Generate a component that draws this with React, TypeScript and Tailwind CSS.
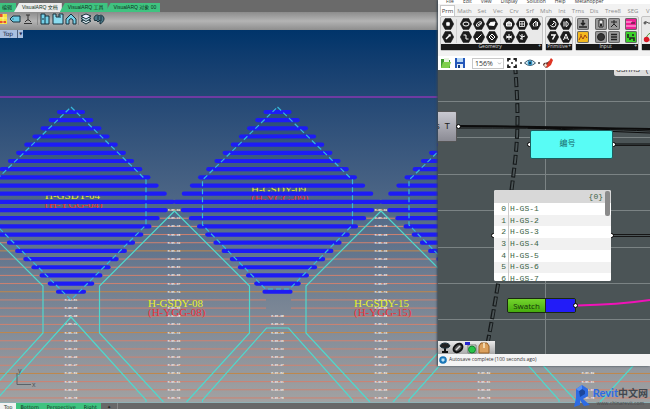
import type { ReactNode } from "react";
import { ChevronDown } from "lucide-react";

const PITCH = 8.17;
const FIRST_ROW = 112;
const ROWS = Array.from({ length: 36 }, (_, i) => i);
const WIDE_ROW = 11;

const rowY = (k: number) => FIRST_ROW + k * PITCH;
const halfWidth = (k: number) => (k <= WIDE_ROW ? 14 + PITCH * k : 15 + PITCH * (22 - k));

const diamonds = [
  { x: 71, flat: false },
  { x: 277.5, flat: true },
  { x: 484, flat: true },
];

// x position of each tag column and the first row that carries a tag
const tagColumns = [
  { x: 71, from: 23 },
  { x: 174, from: 12 },
  { x: 277.5, from: 25 },
  { x: 381, from: 12 },
  { x: 484, from: 25 },
  { x: 588, from: 12 },
];

const cellNames = [
  { x: 45, y: 199, name: "H-GSDY-04", code: "(H-YGG-04)" },
  { x: 251, y: 193, name: "H-GSDY-09", code: "(H-YGG-09)" },
  { x: 148, y: 307, name: "H-GSDY-08", code: "(H-YGG-08)" },
  { x: 354, y: 307, name: "H-GSDY-15", code: "(H-YGG-15)" },
];

function Drawing() {
  return (
    <svg viewBox="0 30 650 373" preserveAspectRatio="xMinYMin slice" className="block h-full w-full">
      <line x1="0" x2="650" y1="97" y2="97" stroke="#8a37b0" strokeWidth="1.6" />

      {ROWS.filter((k) => k >= 12).map((k) => {
        const half = k < 23 ? (k - 12) * PITCH + 5 : 0;
        const color = k % 5 === 2 ? "#c0874a" : "#cf8270";
        if (k < 23) {
          return [-32, 174, 381, 588].map((x) => (
            <line key={`${k}-${x}`} x1={x - half - 12} x2={x + half + 12} y1={rowY(k)} y2={rowY(k)} stroke={color} />
          ));
        }
        if (k < 25) {
          return (
            <path key={k} d={`M0 ${rowY(k)}H266M291 ${rowY(k)}H650`} stroke={color} />
          );
        }
        return <line key={k} x1="0" x2="650" y1={rowY(k)} y2={rowY(k)} stroke={color} />;
      })}

      <g fill="#ececec" fontSize="3" textAnchor="middle" className="font-['Liberation_Mono',monospace] font-bold">
        {tagColumns.map((col) =>
          ROWS.filter((k) => k >= col.from).map((k) => (
            <text key={`${col.x}-${k}`} x={col.x} y={rowY(k) + 1}>
              {`H-GS-${(k * 7) % 90 + 10}`}
            </text>
          )),
        )}
      </g>

      <g fill="none" stroke="#50d8cc" strokeWidth="1.2">
        {[-32, 174.5, 381, 588].map((x) => (
          <g key={x}>
            <path d={`M${x} 211L${x - 75} 286V333L${x - 11} 402`} />
            <path d={`M${x} 211L${x + 75} 286V333L${x + 12} 402`} />
          </g>
        ))}
        {diamonds.map((d) => (
          <path
            key={d.x}
            d={
              d.flat
                ? `M${d.x - 75} 402V400L${d.x - 11} 328H${d.x + 11}L${d.x + 75} 400V402`
                : `M${d.x - 75} 402V400L${d.x} 317L${d.x + 75} 400V402`
            }
          />
        ))}
      </g>

      <g fontSize="11" className="font-['Liberation_Serif',serif]">
        {cellNames.map((c) => (
          <g key={c.name}>
            <text x={c.x} y={c.y} fill="#e8f02c">{c.name}</text>
            <text x={c.x} y={c.y + 9} fill="#ee3038">{c.code}</text>
          </g>
        ))}
      </g>

      <g stroke="#1d1cf5" strokeWidth="4.2" strokeLinecap="round">
        {diamonds.map((d) =>
          ROWS.filter((k) => k <= 22).map((k) => (
            <line
              key={`${d.x}-${k}`}
              x1={d.x - halfWidth(k) + 2}
              x2={d.x + halfWidth(k) - 2}
              y1={rowY(k)}
              y2={rowY(k)}
            />
          )),
        )}
      </g>

      <g fill="none" stroke="#35b8dc" strokeWidth="1.2" strokeDasharray="5 3">
        {diamonds.map((d) => (
          <path
            key={d.x}
            d={
              d.flat
                ? `M${d.x} 107L${d.x + 75} 180V225L${d.x + 12} 289H${d.x - 12}L${d.x - 75} 225V180Z`
                : `M${d.x} 107L${d.x + 75} 180V225L${d.x} 300L${d.x - 75} 225V180Z`
            }
          />
        ))}
      </g>

      <path d="M17 373V384.500H31" fill="none" stroke="#5b6268" />
      <g fill="#50565c" fontSize="7" className="font-['Liberation_Sans',sans-serif]">
        <text x="18" y="373">y</text>
        <text x="32" y="387">x</text>
      </g>
      <line x1="0" x2="650" y1="402.500" y2="402.500" stroke="#8fb0b4" />
    </svg>
  );
}

function RhinoTab({ children, active }: { children: ReactNode; active?: boolean }) {
  return (
    <button
      className={`-ml-0.5 h-full pl-2 pr-1 text-left whitespace-nowrap [clip-path:polygon(5px_0,100%_0,100%_100%,0_100%)] ${
        active ? "bg-[#ececec]" : "bg-[#3fc380]"
      }`}
    >
      {children}
    </button>
  );
}

function ToolButton({ label, children }: { label: string; children: ReactNode }) {
  return (
    <button aria-label={label} className="h-3 w-3 shrink-0">
      <svg viewBox="0 0 12 12" className="h-3 w-3" fill="none" stroke="#17313c" strokeWidth="1">
        {children}
      </svg>
    </button>
  );
}

function RhinoToolbar() {
  return (
    <div className="flex h-[18px] items-center gap-px bg-linear-to-b from-[#8c8c8c] via-[#b4b4b4] to-[#8e8e8e] pb-1">
      <button aria-label="Levels" className="h-3 w-2">
        <svg viewBox="0 0 8 12" className="h-3 w-2">
          <path d="M0 1H7V11H0Z" fill="#f6e23a" />
          <path d="M0 1H3V4H0ZM0 8H6V10H0Z" fill="#e8502c" />
          <path d="M3 1V11M0 5H7" stroke="#fff7b0" strokeWidth=".7" />
        </svg>
      </button>
      <ToolButton label="Tag">
        <path d="M1 6L4 3H11V9H4Z" fill="#6ccbe4" />
        <path d="M4 5.500V6.500" />
      </ToolButton>
      <ToolButton label="Stamp">
        <path d="M4 2H8M6 2V7M3 9L5 7H7L9 9M2 10.500H10" stroke="#333" />
      </ToolButton>
      <span className="ml-0.5 h-3 w-px bg-[#8a8a8a]" />
      <ToolButton label="Door">
        <path d="M2 11V1H6V11ZM6 3H10V11H6" fill="#74d0e8" />
        <path d="M4 5V7" />
      </ToolButton>
      <ToolButton label="Section">
        <path d="M1 1H4V4H7V1H11V11H1Z" fill="#8adcf0" />
        <path d="M8 2V5" />
      </ToolButton>
      <ToolButton label="House">
        <path d="M1 6L6 1L11 6V11H8V7Q6 4 4 7V11H1Z" fill="#74d0e8" />
      </ToolButton>
      <span className="h-3 w-px bg-[#8a8a8a]" />
      <ToolButton label="Layers">
        <path d="M1 8L6 11L11 8L6 6Z" fill="#d8e6ea" />
        <path d="M1 5.500L6 8.500L11 5.500L6 3Z" fill="#bcdce4" />
        <path d="M1 3L6 6L11 3L6 1Z" fill="#eef" />
      </ToolButton>
      <ToolButton label="Shell">
        <path d="M1 6C1 2 5 1 6 3C8 1 11 3 11 6C11 8 9 10 7 11V7L5 9L3 7L2 8Z" fill="#4a7888" />
        <path d="M5 3V7M8 3V8" />
      </ToolButton>
    </div>
  );
}

const hexGlyphs: Record<string, ReactNode> = {
  Point: <path d="M4.500 4.500L7.500 7.500M7.500 4.500L4.500 7.500" strokeWidth="1.8" />,
  Vector: <path d="M4 8L8 4M6.500 4H8V5.500" strokeWidth="1.5" />,
  Circle: <ellipse cx="6" cy="6" rx="3" ry="2" />,
  Curve: <path d="M3.500 4H6V8H8.500" />,
  Ellipse: <path d="M3.500 8C3 5 7 3 8.500 4C9 6 6 9 3.500 8ZM5 7L8 5" />,
  Line: <path d="M3.500 8.500L8.500 3.500M3.500 7V8.500H5" />,
  Plane: <path d="M3 7L4.500 4.500L9 4L8 7.500Z" fill="#fff" />,
  Transform: <path d="M6 3L9 6L6 9L3 6ZM5 5L7 7" />,
  Brep: <path d="M3.500 5L6 3.500L8.500 5V8H3.500ZM3.500 5H8.500" fill="#aaa" />,
  Box: <path d="M6 3V9M3 5L9 7M3 7L9 5" />,
  Mesh: <path d="M3.500 3.500H8.500V8.500H3.500ZM6 3.500V8.500M3.500 6H8.500" strokeWidth=".8" />,
  Group: <path d="M6 3V9M6 6L3.500 4M6 6L9 5M6 7L4 8" />,
  Surface: <path d="M7 3L4 6L5 8.500M7 3V8.500M8.500 4V8" />,
  Domain: <path d="M3.500 7A2.800 2.800 0 1 0 6 3.300M5 7L7.500 4.500" />,
  Colour: <path d="M4 3.500V8.500M6 3.500V8.500M6 3.500C9 4 9 8 6 8.500" />,
  Integer: <path d="M4 4H8L5.500 8.500" strokeWidth="1.5" />,
  Text: <path d="M3.500 9L6 3L8.500 9M4.500 7H7.500" />,
};

function Hex({ name }: { name: string }) {
  return (
    <button aria-label={name} className="h-[12px] w-[12px]">
      <svg viewBox="0 0 12 12" className="h-3 w-3" fill="none" stroke="#fff">
        <path d="M3.200 .6H8.800L11.700 6L8.800 11.400H3.200L.3 6Z" fill="#1c1c1c" stroke="#111" strokeWidth=".5" />
        {hexGlyphs[name]}
      </svg>
    </button>
  );
}

function Tile({ name, children, className = "bg-[#9a9a9a]" }: { name: string; children: ReactNode; className?: string }) {
  return (
    <button aria-label={name} className={`h-[12px] w-[12px] rounded-xs ring-1 ring-inset ring-[#666] ${className}`}>
      <svg viewBox="0 0 12 12" className="h-3 w-3" fill="none" stroke="#222">
        {children}
      </svg>
    </button>
  );
}

function RibbonPanel({ title, children, className = "" }: { title: string; children: ReactNode; className?: string }) {
  return (
    <section className={`flex shrink-0 flex-col rounded-xs border border-[#c4c4c4] bg-[#e9e9e9] ${className}`}>
      <div className="flex flex-1 items-center justify-between px-px">{children}</div>
      <div className="flex h-[6px] justify-end bg-[#181818] px-px text-[5px] leading-[5px] text-[#ddd]">
        <span className="flex-1 text-center">{title}</span>
        <span>+</span>
      </div>
    </section>
  );
}

function Ribbon() {
  return (
    <div className="flex h-[35px] shrink-0 gap-0.5 overflow-hidden pl-0.5">
      <RibbonPanel title="Geometry" className="w-[103px]">
        <div className="grid gap-px"><Hex name="Point" /><Hex name="Vector" /></div>
        <span className="h-6 w-px bg-[#cfcfcf]" />
        <div className="grid grid-cols-3 gap-px">
          <Hex name="Circle" /><Hex name="Ellipse" /><Hex name="Plane" />
          <Hex name="Curve" /><Hex name="Line" /><Hex name="Transform" />
        </div>
        <span className="h-6 w-px bg-[#cfcfcf]" />
        <div className="grid grid-cols-3 gap-px">
          <Hex name="Brep" /><Hex name="Mesh" /><Hex name="Surface" />
          <Hex name="Box" /><Hex name="Group" />
        </div>
      </RibbonPanel>
      <RibbonPanel title="Primitive" className="w-[28px]">
        <div className="grid grid-cols-2 gap-px">
          <Hex name="Domain" /><Hex name="Colour" />
          <Hex name="Integer" /><Hex name="Text" />
        </div>
      </RibbonPanel>
      <RibbonPanel title="Input" className="w-[64px]">
        <div className="grid gap-px">
          <Tile name="Import"><path d="M6 2V7M4 5L6 7L8 5M2 9H10" strokeWidth="1.5" /></Tile>
          <Tile name="Graph" className="bg-[#f5b91e]"><path d="M2 9L4 5L6 8L8 4L10 7M3 4H5" stroke="#a04010" /></Tile>
        </div>
        <div className="grid grid-cols-2 gap-px">
          <Tile name="Button"><path d="M4 2H8V9H4Z" fill="#eee" /><path d="M5 7H7" strokeWidth="3" /></Tile>
          <Tile name="Slider"><path d="M6 2V6L3 9M6 6L9 9M3 4H9" /></Tile>
          <Tile name="Knob"><circle cx="6" cy="6" r="3.500" fill="#333" /></Tile>
          <Tile name="Panel"><path d="M3 3.500H9M3 6H9M3 8.500H9" strokeWidth="1.3" /></Tile>
        </div>
        <div className="grid gap-px">
          <Tile name="Gradient" className="bg-[#f01f96]"><path d="M1 4H7M1 8H11" stroke="#ffd0ea" /><path d="M6 5H10" /></Tile>
          <Tile name="Sampler" className="bg-[#3cd32a]"><path d="M3 3V7M8 3V5M5 9V7H9V10" strokeWidth="1.600" /></Tile>
        </div>
      </RibbonPanel>
      <RibbonPanel title="" className="w-[40px]">
        <div className="grid gap-px">
          <svg viewBox="0 0 12 12" className="h-3 w-3" fill="none" stroke="#333">
            <path d="M1 5C3 2 5 6 7 5S10 8 12 8" /><circle cx="2" cy="5" r="1" fill="#fff" />
          </svg>
          <svg viewBox="0 0 12 12" className="h-3 w-3">
            <path d="M3 8C4 4 6 2 9 2M9 8C9 5 8 4 7 3" fill="none" stroke="#3c8a20" />
            <circle cx="3.500" cy="8.500" r="2.700" fill="#d81826" /><circle cx="9" cy="9" r="2.500" fill="#d81826" />
          </svg>
        </div>
      </RibbonPanel>
    </div>
  );
}

const componentTabs = ["Set", "Vec", "Crv", "Srf", "Msh", "Int", "Trns", "Dis"];

function CanvasToolbar() {
  return (
    <div className="flex h-[14px] shrink-0 items-center bg-white pl-0.5">
      <button aria-label="Open" className="mr-0.5 h-3 w-3">
        <svg viewBox="0 0 12 12" className="h-3 w-3">
          <path d="M1 11V2H5L6 3H10V11Z" fill="#3f9a30" />
          <path d="M4 1H9V7H4Z" fill="#e8f4e0" />
          <path d="M1 11L3 5H11L9 11Z" fill="#7fcf4c" />
        </svg>
      </button>
      <button aria-label="Save" className="mr-1 h-3 w-3">
        <svg viewBox="0 0 12 12" className="h-3 w-3">
          <path d="M1 1H11V11H1Z" fill="#2457ba" />
          <path d="M3 1H9V5H3Z" fill="#b8d7f5" />
          <path d="M3 7H9V11H3Z" fill="#e5eef8" />
          <path d="M4 8H6V11H4Z" fill="#163c80" />
        </svg>
      </button>
      <label className="relative mx-0.5 flex items-center">
        <select aria-label="Zoom" defaultValue="156%" className="h-[11px] w-[32px] appearance-none border border-[#c8c8c8] bg-white pl-0.5 text-[7px] leading-[9px] text-[#333]">
          <option>156%</option>
        </select>
        <ChevronDown size={5} className="pointer-events-none absolute right-0.5 text-[#555]" />
      </label>
      <button aria-label="Zoom extents" className="h-3 w-3">
        <svg viewBox="0 0 12 12" className="h-3 w-3" fill="none" stroke="#222" strokeWidth="1.800">
          <path d="M2 4.500V2H4.500M7.500 2H10V4.500M10 7.500V10H7.500M4.500 10H2V7.500" />
          <circle cx="6" cy="6" r="1" fill="#222" stroke="none" />
        </svg>
      </button>
      <span className="mx-[2px] h-[2px] w-[2px] rounded-full bg-[#333]" />
      <button aria-label="Preview" className="h-3 w-3">
        <svg viewBox="0 0 12 12" className="h-3 w-3">
          <path d="M.5 6Q6 0 11.500 6Q6 11 .5 6Z" fill="#d8f0fa" stroke="#345468" />
          <circle cx="6" cy="6" r="2.400" fill="#2f8fc0" /><circle cx="6" cy="6" r="1" fill="#123" />
        </svg>
      </button>
      <span className="mx-[2px] h-[2px] w-[2px] rounded-full bg-[#333]" />
      <button aria-label="Sketch" className="h-3 w-3">
        <svg viewBox="0 0 12 12" className="h-3 w-3">
          <path d="M1 8C2 4 5 7 7 4L8 8L4 11Z" fill="#5b2a24" />
          <path d="M4 9L9 1L11 3L9 8L5 11Z" fill="#df3524" />
          <path d="M2 8L4 6L5 9L3 10Z" fill="#f4e4d4" />
        </svg>
      </button>
    </div>
  );
}

function Port({ className }: { className: string }) {
  return <span className={`absolute h-[5px] w-[5px] rounded-full border border-black bg-white ${className}`} />;
}

const panelItems = ["H-GS-1", "H-GS-2", "H-GS-3", "H-GS-4", "H-GS-5", "H-GS-6", "H-GS-7"];

function Canvas() {
  return (
    <div className="relative flex-1 overflow-hidden bg-[#4b5456]">
      <svg viewBox="0 0 212 284" preserveAspectRatio="xMinYMin slice" className="absolute inset-0 h-full w-full" fill="none">
        <path
          d="M0 31.500H212M0 67.500H212M0 104.500H212M0 140.500H212M0 177.500H212M0 213.500H212M0 249.500H212M107.500 0V284"
          stroke="#7b8384"
        />
        <path d="M77 -6C80 35 81 60 76 100S62 210 49 276" stroke="#161a1b" strokeWidth="4" strokeDasharray="10 3" />
        <path d="M77 -5C80 36 81 61 76 101S62 211 49 277" stroke="#4b5456" strokeWidth="1.800" strokeDasharray="8 5" />
        <path d="M21 56C80 56 140 58 212 59" stroke="#0c0c0c" strokeWidth="2" />
        <path d="M21 58C80 58 140 58 212 61M90 58L212 63M177 74H212" stroke="#0c0c0c" />
        <path d="M177 75.500H212M173 164.500H212M173 166.500H212" stroke="#161616" />
        <path d="M139 235.500C165 235 185 234 212 230" stroke="#f012b8" strokeWidth="2" />
      </svg>

      <div className="absolute left-0 top-[41px] flex h-[31px] w-[19px] items-center justify-end overflow-hidden rounded-r-xs border border-l-0 border-[#555] bg-linear-to-b from-[#c9c9d1] to-[#8b8b94] pr-1.5 font-['Liberation_Sans',sans-serif] text-[9px] whitespace-pre text-[#222]">
        s  T
      </div>
      <Port className="left-[18px] top-[54px]" />

      <Port className="left-[89px] top-[72px]" />
      <Port className="left-[173px] top-[72px]" />
      <div className="absolute left-[92px] top-[60px] flex h-[29px] w-[83px] items-center justify-center rounded-xs border border-[#1c5f60] bg-[#58fcf5] pr-2 pb-1 text-[8px] text-[#17696a]">
        编号
      </div>

      <div className="absolute left-[176px] top-0 h-[6px] w-[40px] overflow-hidden rounded-b-xs bg-[#dcdcdc] pl-0.5">
        <p className="-mt-1 whitespace-nowrap font-['Liberation_Mono',monospace] text-[8px] leading-[8px] text-[#444]">GSHMS (</p>
      </div>

      <Port className="left-[53px] top-[163px]" />
      <Port className="left-[171px] top-[163px]" />
      <div className="absolute left-[56px] top-[120px] h-[91px] w-[117px] overflow-hidden rounded-xs bg-white font-['Liberation_Mono',monospace] text-[8px] text-[#3c6446]">
        <div className="flex h-[13px] items-center justify-end bg-[#d8d8d8] pr-2 leading-[8px]">{"{0}"}</div>
        <ol className="flex h-[82px] flex-col">
          {panelItems.map((item, i) => (
            <li key={item} className="flex flex-1 items-center leading-[8px] odd:bg-white even:bg-[#f1f1f1]">
              <span className="flex w-[15px] items-center justify-end self-stretch border-r border-[#ccc] pr-0.5">{i}</span>
              <span className="pl-px">{item}</span>
            </li>
          ))}
        </ol>
        <span className="absolute right-px top-px h-[25px] w-[5px] rounded-xs bg-[#8a8a8a]" />
      </div>

      <div className="absolute left-[69px] top-[228px] flex h-[15px] w-[69px] overflow-hidden rounded-xs border border-[#1a2a10] text-[8px]">
        <span className="flex w-[37px] items-center justify-center bg-linear-to-b from-[#74d42c] to-[#46ac0c] text-[#16300a]">Swatch</span>
        <span className="flex-1 border-l border-[#222] bg-[#221cf8]" />
      </div>
      <Port className="left-[135px] top-[233px]" />

      <div className="absolute bottom-0 left-0 flex h-[13px] items-center gap-px bg-linear-to-b from-[#ececec] to-[#a9a9a9] px-px">
        <ToolButton label="Tree">
          <path d="M6 11V5M3 10H9" stroke="#111" strokeWidth="2" />
          <path d="M1 4C2 0 10 0 11 4C9 7 3 7 1 4Z" fill="#222" />
        </ToolButton>
        <ToolButton label="Clip">
          <ellipse cx="6" cy="6" rx="5" ry="3.500" transform="rotate(-40 6 6)" fill="#555" stroke="#111" strokeWidth="2" />
          <path d="M4 8L8 4" stroke="#ddd" strokeWidth="1.600" />
        </ToolButton>
        <ToolButton label="Preview colours">
          <path d="M3 3H11V11H3Z" fill="#e4f4e4" stroke="#777" />
          <path d="M0 0H5V3H0Z" fill="#2323cf" stroke="none" />
          <circle cx="7" cy="7.500" r="3.500" fill="#28c548" stroke="#158030" />
        </ToolButton>
        <ToolButton label="Package">
          <path d="M1 4L3 1H9L11 4V11H1Z" fill="#dba05c" stroke="#966026" />
          <path d="M5 1H7V6H5Z" fill="#f2d8ac" stroke="none" />
        </ToolButton>
        <span className="w-[3px]" />
      </div>
    </div>
  );
}

function GrasshopperWindow() {
  return (
    <div className="absolute left-[438px] right-0 top-0 flex h-[366px] flex-col overflow-hidden bg-[#f2f2f2] shadow-[-1px_0_2px_#3a4650]">
      <nav className="flex h-[4px] shrink-0 items-end gap-[9px] overflow-hidden bg-white pl-2 text-[5px] text-[#333]">
        {["File", "Edit", "View", "Display", "Solution", "Help", "Metahopper"].map((m) => (
          <button key={m} className="leading-[5px]">{m}</button>
        ))}
      </nav>
      <div className="flex h-[12px] shrink-0 items-end overflow-hidden text-[6px] leading-[10px] text-[#8c8c8c]">
        <button className="ml-0.5 h-[11px] w-[15px] shrink-0 border border-b-0 border-[#c8c8c8] bg-white leading-[9px] text-[#444]">Prm</button>
        <button className="w-[19px] shrink-0">Math</button>
        {componentTabs.map((t) => (
          <button key={t} className="w-[16px] shrink-0 whitespace-nowrap text-center">{t}</button>
        ))}
        <button className="w-[22px] shrink-0">Tree8</button>
        <button className="w-[18px] shrink-0">SEG</button>
        <button className="shrink-0 pl-1">V</button>
      </div>
      <Ribbon />
      <div className="h-[5px] shrink-0" />
      <CanvasToolbar />
      <Canvas />
      <div className="flex h-[12px] shrink-0 items-center gap-0.5 bg-[#f4f4f4] pl-px text-[5px] text-[#333]">
        <svg viewBox="0 0 8 8" className="h-2 w-2">
          <circle cx="4" cy="4" r="3.800" fill="#1976b8" />
          <path d="M2.500 2.500H5.500V4.500L4 6L2.500 4.500Z" fill="#bfe6f8" />
        </svg>
        Autosave complete (100 seconds ago)
      </div>
    </div>
  );
}

function Watermark() {
  return (
    <div className="absolute bottom-0.5 right-0.5 flex items-end gap-0.5">
      <svg viewBox="0 0 18 22" className="h-[22px] w-[18px]">
        <path d="M3 4L9 0L15 4V11L10 14L17 20L11 21L7 15V20L1 22L3 13Z" fill="#2e6be4" />
        <path d="M6 6L9 4L12 6V9L7 12Z" fill="#1c469c" />
        <path d="M3 4L9 0V4L6 6Z" fill="#5590f8" />
      </svg>
      <div className="text-center">
        <p className="font-['Liberation_Sans','Noto_Sans_CJK_SC',sans-serif] text-[10px] leading-[12px] font-bold text-[#42474e]">
          <span className="font-['Lato',sans-serif] text-[11px] text-[#2e6be4]">Revit</span>中文网
        </p>
        <p className="text-[5px] leading-[7px] text-[#4c4c4c]">www.chinarevit.com</p>
      </div>
    </div>
  );
}

export default function App() {
  return (
    <div className="relative flex h-screen flex-col overflow-hidden bg-[#686868] font-['Open_Sans','Noto_Sans_CJK_SC',sans-serif]">
      <div className="flex h-[12px] shrink-0 items-stretch bg-[#6a6a6a] pt-[3px] font-['Liberation_Sans','Noto_Sans_CJK_SC',sans-serif] text-[5px] leading-[9px] text-[#103020]">
        <div className="-ml-1 flex">
          <RhinoTab>编辑</RhinoTab>
          <RhinoTab active>VisualARQ 文档</RhinoTab>
          <RhinoTab>VisualARQ 工具</RhinoTab>
          <RhinoTab>VisualARQ 对象 00</RhinoTab>
        </div>
      </div>
      <RhinoToolbar />
      <main className="relative min-h-0 flex-1 bg-linear-to-b from-[#00346a] to-[#a2a2a2]">
        <Drawing />
        <button className="absolute left-0 top-0 flex h-[8px] items-center bg-[#a9c0e0] pl-[3px] font-['DejaVu_Sans',sans-serif] text-[6px] leading-[8px] text-[#1c2c4c]">
          Top
          <span className="ml-1 border-l border-[#4c6080] px-px text-[4px]">▼</span>
        </button>
      </main>
      <div className="flex h-[6px] shrink-0 overflow-hidden bg-[#686868] font-['DejaVu_Sans',sans-serif] text-[5px] leading-[7px] text-[#10301f]">
        <button className="h-[8px] bg-[#f2f2f2] pl-1 pr-1">Top</button>
        <button className="h-[8px] bg-[#3fc380] px-1">Bottom</button>
        <button className="h-[8px] bg-[#3fc380] px-1">Perspective</button>
        <button className="h-[8px] bg-[#3fc380] px-1">Right</button>
        <button className="h-[8px] border-r border-[#888] px-1.5 text-[#222]">✦</button>
      </div>
      <GrasshopperWindow />
      <Watermark />
    </div>
  );
}
